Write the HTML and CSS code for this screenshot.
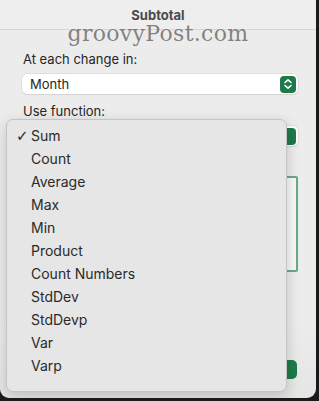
FILE: index.html
```html
<!DOCTYPE html>
<html lang="en">
<head>
    <meta charset="UTF-8">
    <meta name="viewport" content="width=device-width, initial-scale=1.0">
    <title>Subtotal</title>
    <link rel="stylesheet" href="styles.css">
</head>
<body>
    <div class="window">
        <!-- Title bar -->
        <div class="title-bar">Subtotal</div>
        <div class="watermark">groovyPost.com</div>

        <div class="content">
            <p class="label">At each change in:</p>
            <div class="select">
                <span>Month</span>
                <span class="stepper">
                    <svg width="10" height="12" viewBox="0 0 10 12"><path d="M2 4.5 L5 1.8 L8 4.5 M2 7.5 L5 10.2 L8 7.5" fill="none" stroke="#fff" stroke-width="1.6" stroke-linecap="round" stroke-linejoin="round"/></svg>
                </span>
            </div>

            <p class="label">Use function:</p>
            <div class="select">
                <span></span>
                <span class="stepper"></span>
            </div>

            <!-- list of columns, covered by the menu -->
            <div class="list-box"></div>

            <div class="buttons">
                <span class="btn"></span>
                <span class="btn primary"></span>
            </div>
        </div>

        <!-- Open popup menu -->
        <ul class="menu">
            <li class="checked">Sum</li>
            <li>Count</li>
            <li>Average</li>
            <li>Max</li>
            <li>Min</li>
            <li>Product</li>
            <li>Count Numbers</li>
            <li>StdDev</li>
            <li>StdDevp</li>
            <li>Var</li>
            <li>Varp</li>
        </ul>
    </div>
</body>
</html>
```

FILE: styles.css
```css
* {
    margin: 0;
    padding: 0;
    box-sizing: border-box;
}

body {
    font-family: Inter, 'Liberation Sans', sans-serif;
    background: #1a1a1a;
    width: 319px;
    height: 401px;
    overflow: hidden;
}

.window {
    position: relative;
    width: 316px;
    height: 398px;
    background: linear-gradient(180deg, #ececec 0%, #ececec 80%, #e4e6e4 100%);
    border-radius: 0 0 9px 9px;
    overflow: hidden;
}

.title-bar {
    height: 30px;
    display: flex;
    align-items: center;
    justify-content: center;
    font-size: 13px;
    font-weight: 700;
    color: #4a4a4a;
    border-bottom: 1px solid #d6d6d6;
    background: #eeeeee;
}

.watermark {
    position: absolute;
    top: 21px;
    left: 0;
    width: 316px;
    text-align: center;
    font-family: 'DejaVu Serif', 'Liberation Serif', serif;
    font-size: 22px;
    line-height: 26px;
    letter-spacing: 0.3px;
    color: rgba(110, 110, 110, 0.85);
}

.content {
    padding: 21px 18px 0 22px;
    display: flex;
    flex-direction: column;
}

.label {
    font-size: 13px;
    line-height: 16px;
    color: #262626;
    padding-left: 1px;
    margin-bottom: 7px;
}

.select {
    height: 20px;
    background: #fff;
    border-radius: 5px;
    box-shadow: 0 0 0 0.5px #d0d0d0, 0 1px 1px rgba(0, 0, 0, 0.08);
    display: flex;
    align-items: center;
    justify-content: space-between;
    padding: 0 2px 0 8px;
    font-size: 13px;
    color: #262626;
    margin-bottom: 9px;
}

.stepper {
    width: 16px;
    height: 17px;
    background: #1e7a4a;
    border-radius: 4px;
    display: flex;
    align-items: center;
    justify-content: center;
}

.label + .select + .label + .select {
    margin-top: 0;
}

.list-box {
    height: 96px;
    margin-top: 21px;
    border: 2px solid #6aa886;
    border-radius: 2px;
    background: #f7f7f7;
}

.buttons {
    display: flex;
    justify-content: flex-end;
    gap: 10px;
    margin-top: 88px;
    padding-right: 1px;
}

.btn {
    width: 70px;
    height: 19px;
    border-radius: 5px;
    background: #fff;
}

.btn.primary {
    background: #1e7a4a;
}

.menu {
    position: absolute;
    top: 119px;
    left: 6px;
    width: 281px;
    height: 273px;
    list-style: none;
    padding-top: 4px;
    background: #e6e6e6;
    border: 1px solid #c4c4c4;
    border-radius: 7px;
    box-shadow: 0 4px 14px rgba(0, 0, 0, 0.18);
}

.menu li {
    height: 23px;
    display: flex;
    align-items: center;
    padding-left: 24px;
    font-size: 14px;
    color: #2a2a2a;
    position: relative;
}

.menu li.checked::before {
    content: '\2713';
    position: absolute;
    left: 9px;
    font-family: 'DejaVu Sans', sans-serif;
    font-size: 15px;
    font-weight: 700;
}
```
